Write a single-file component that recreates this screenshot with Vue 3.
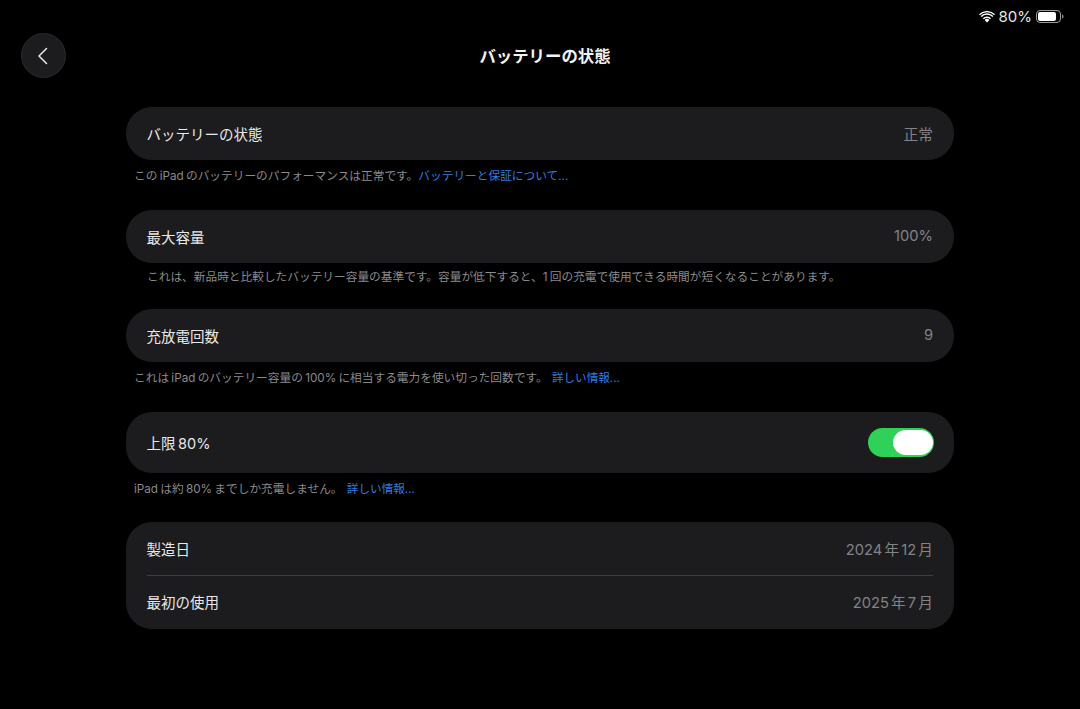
<script setup>
const title = 'バッテリーの状態';
</script>

<template>
  <div class="page">
    <div class="status_bar">
      <svg class="wifi" width="16" height="12" viewBox="0 0 16 12">
        <path d="M8 11.500 5.600 9a3.400 3.400 0 0 1 4.800 0z" fill="#fff" />
        <path d="M3.900 7.300a5.800 5.800 0 0 1 8.200 0l-1 1.050a4.400 4.400 0 0 0-6.200 0z" fill="#fff" />
        <path d="M1.600 5a9 9 0 0 1 12.800 0l-1 1.050a7.600 7.600 0 0 0-10.800 0z" fill="#fff" />
        <path d="M0 3.300a11.300 11.300 0 0 1 16 0l-.9 1a10 10 0 0 0-14.200 0z" fill="#fff" />
      </svg>
      <span class="percent">80%</span>
      <svg class="battery" width="28" height="13" viewBox="0 0 28 13">
        <rect x="0.500" y="0.500" width="24" height="12" rx="3.500" fill="none" stroke="#9a9a9a" />
        <rect x="2" y="2" width="18" height="9" rx="2" fill="#fff" />
        <path d="M26 4.500c1 .3 1.500 1 1.500 2s-.5 1.700-1.500 2z" fill="#8a8a8a" />
      </svg>
    </div>

    <header class="header">
      <button class="back" aria-label="戻る">
        <svg width="14" height="20" viewBox="0 0 14 20">
          <path d="M9.500 2.500 2 10l7.500 7.500" fill="none" stroke="#e8e8e8" stroke-width="1.500" stroke-linecap="round" stroke-linejoin="round" />
        </svg>
      </button>
      <h1 class="title">{{ title }}</h1>
    </header>

    <main class="content">
      <section class="group gap26">
        <div class="card row">
          <span class="label">バッテリーの状態</span>
          <span class="value">正常</span>
        </div>
        <p class="note">この iPad のバッテリーのパフォーマンスは正常です。<a class="link">バッテリーと保証について...</a></p>
      </section>

      <section class="group gap24">
        <div class="card row">
          <span class="label">最大容量</span>
          <span class="value">100%</span>
        </div>
        <p class="note note_wide">これは、新品時と比較したバッテリー容量の基準です。容量が低下すると、1 回の充電で使用できる時間が短くなることがあります。</p>
      </section>

      <section class="group gap26">
        <div class="card row">
          <span class="label">充放電回数</span>
          <span class="value">9</span>
        </div>
        <p class="note">これは iPad のバッテリー容量の 100% に相当する電力を使い切った回数です。 <a class="link link_more">詳しい情報...</a></p>
      </section>

      <section class="group gap25">
        <div class="card row row_tall">
          <span class="label">上限 80%</span>
          <div class="toggle"><div class="knob"></div></div>
        </div>
        <p class="note">iPad は約 80% までしか充電しません。 <a class="link link_more">詳しい情報...</a></p>
      </section>

      <section class="card dates">
        <div class="date_row">
          <span class="label">製造日</span>
          <span class="value">2024 年 12 月</span>
        </div>
        <div class="divider"></div>
        <div class="date_row date_row_last">
          <span class="label">最初の使用</span>
          <span class="value">2025 年 7 月</span>
        </div>
      </section>
    </main>
  </div>
</template>

<style>
html, body {
  background: #000;
}
</style>

<style scoped>
.page {
  width: 1080px;
  height: 709px;
  overflow: hidden;
  background: #000;
  font-family: Inter, "Noto Sans CJK JP", sans-serif;
}

.status_bar {
  height: 33px;
  display: flex;
  align-items: center;
  justify-content: flex-end;
  padding-right: 16px;
  box-sizing: border-box;
  color: #e6e6e6;
}

.wifi {
  margin-right: 4px;
}

.percent {
  font-size: 15px;
  margin-right: 4px;
}

.header {
  height: 46px;
  display: flex;
  align-items: center;
  justify-content: center;
  position: relative;
}

.back {
  position: absolute;
  left: 21px;
  top: 0;
  width: 45px;
  height: 45px;
  padding: 0;
  display: flex;
  align-items: center;
  justify-content: center;
  border-radius: 50%;
  border: 1px solid #2b2b2d;
  background: #1c1c1e;
}

.title {
  margin: 0 0 3px 10px;
  font-size: 16.400px;
  font-weight: 700;
  color: #f2f2f2;
}

.content {
  width: 828px;
  margin: 28px 0 0 126px;
}

.group.gap26 {
  margin-bottom: 26px;
}

.group.gap24 {
  margin-bottom: 24px;
}

.group.gap25 {
  margin-bottom: 25px;
}

.card {
  background: #1c1c1e;
  border-radius: 26px;
}

.row {
  height: 53px;
  box-sizing: border-box;
  display: flex;
  align-items: center;
  justify-content: space-between;
  padding: 0 21px 1px 20.500px;
}

.row_tall {
  height: 61px;
  padding-right: 20px;
}

.label {
  font-size: 14.500px;
  color: #e8e8e8;
  word-spacing: -1.500px;
}

.value {
  font-size: 14.700px;
  color: #838386;
  word-spacing: -2px;
}

.note {
  margin: 8px 0 0;
  padding-left: 8px;
  height: 16px;
  line-height: 16px;
  font-size: 11.700px;
  color: #8a8a8d;
  white-space: nowrap;
  word-spacing: -1px;
}

.note_wide {
  margin-top: 6px;
  padding-left: 21px;
}

.link {
  color: #2f7de1;
}

.link_more {
  margin-left: 2px;
  font-size: 11.600px;
}

.toggle {
  width: 66px;
  height: 29px;
  border-radius: 15px;
  background: #30d158;
  position: relative;
}

.knob {
  position: absolute;
  right: 1px;
  top: 2px;
  width: 40px;
  height: 25px;
  border-radius: 13px;
  background: #fff;
}

.dates {
  height: 107px;
  padding: 0 21px 0 20.500px;
}

.date_row {
  height: 53px;
  display: flex;
  align-items: center;
  justify-content: space-between;
}

.date_row_last {
  padding-bottom: 2px;
  height: 51px;
}

.divider {
  height: 1px;
  background: #3e3e40;
}
</style>
